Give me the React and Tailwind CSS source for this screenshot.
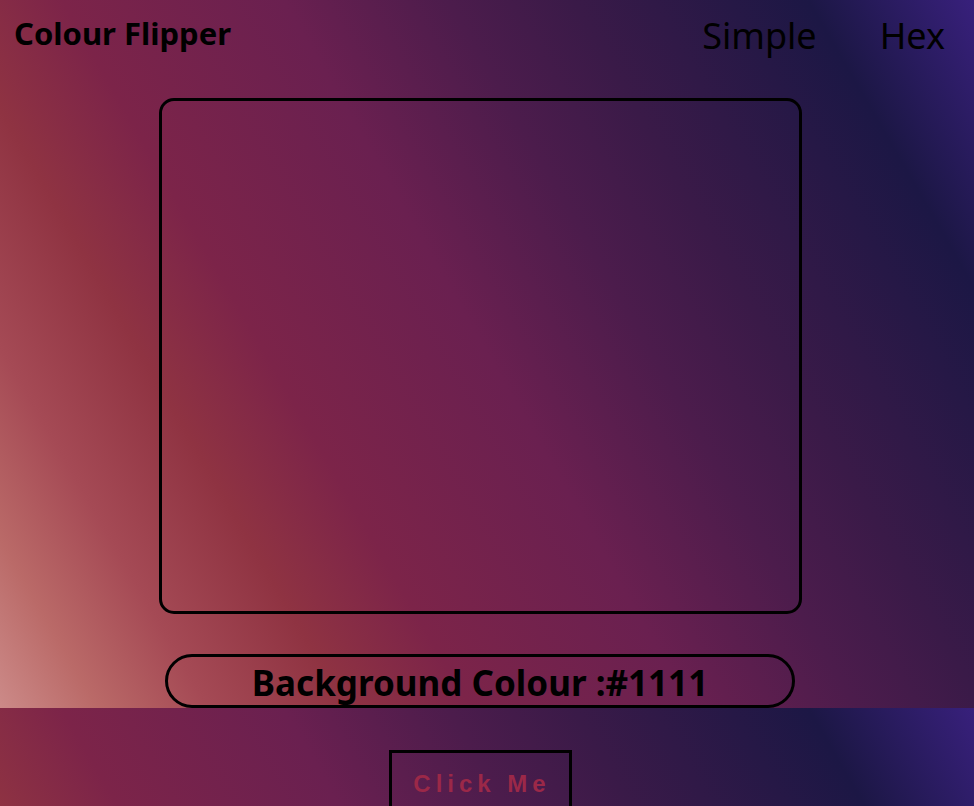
export default function App() {
  return (
    <div
      className="min-h-[806px] w-full overflow-hidden bg-[linear-gradient(60deg,#cc8a88_0%,#ba6a68_7%,#a54a55_15%,#8f3342_25%,#7c2449_34%,#6a2050_50%,#4c1c4c_62%,#3a1a48_71%,#1c1745_88%,#38207c_100%)] bg-size-[100%_708px] bg-repeat-y font-['Noto_Sans',sans-serif] text-black"
    >
      <div className="w-[960px] h-[806px] flex flex-col">
        <header className="flex justify-between items-start">
          <h1 className="ml-[14px] mt-[12px] text-[31px] leading-[42px] font-bold">Colour Flipper</h1>
          <nav className="flex gap-[63px] mt-[12px] mr-[15px] text-[36px] leading-[48px]">
            <span>Simple</span>
            <span>Hex</span>
          </nav>
        </header>
        <div className="flex flex-col items-center">
          <div className="mt-[38px] w-[643px] h-[516px] border-[3px] border-black rounded-[15px]"></div>
          <div className="mt-[40px] w-[630px] h-[54px] border-[3px] border-black rounded-full flex items-center justify-center">
            <span className="text-[35px] font-bold leading-none mt-[2px]">Background Colour :#1111</span>
          </div>
          <button className="mt-[42px] w-[183px] h-[80px] border-[3px] border-black flex items-start justify-center pt-[13px] pl-[4px] font-['Liberation_Sans',Arial,sans-serif] font-bold text-[24px] tracking-[5px] text-[#9b2848]">
            Click Me
          </button>
        </div>
      </div>
    </div>
  );
}
